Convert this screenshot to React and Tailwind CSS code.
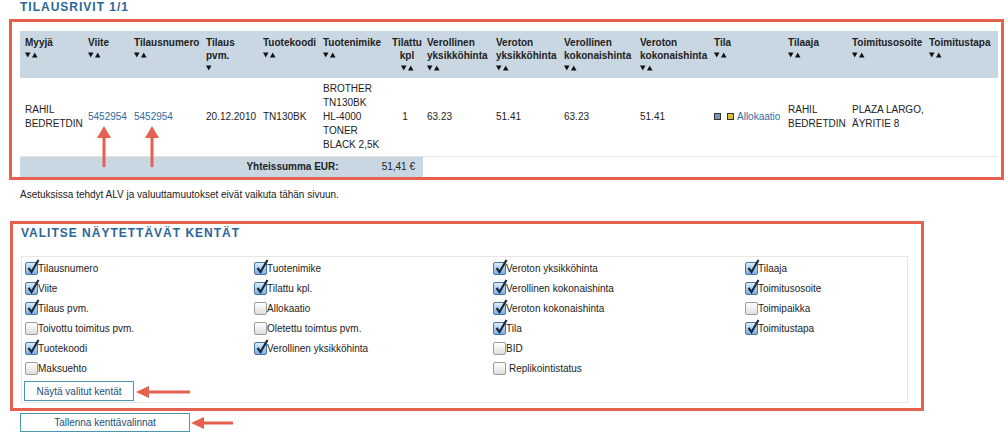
import React from "react";

const Sort = ({ up = true }) => (
  <svg width="13" height="6" viewBox="0 0 13 6" className="inline-block align-middle">
    <path d="M0 0.5h5.5L2.75 5.5z" fill="#111" />
    {up && <path d="M7 5.5h5.5L9.75 0.5z" fill="#111" />}
  </svg>
);

const Box = ({ checked }) =>
  checked ? (
    <span className="relative inline-block w-[13px] h-[13px] shrink-0 rounded-[2px] border border-[#4a76a0] bg-linear-to-b from-[#dcecfa] to-[#7db0de]">
      <svg className="absolute -top-[4px] left-[1px]" width="13" height="15" viewBox="0 0 13 15">
        <path d="M1.5 9 L4.5 13 L11.5 1" stroke="#1b2a44" strokeWidth="2.2" fill="none" />
      </svg>
    </span>
  ) : (
    <span className="inline-block w-[13px] h-[13px] shrink-0 rounded-[2px] border border-[#9c9c9c] bg-linear-to-b from-white to-[#dedede]" />
  );

const headers = [
  { l: ["Myyjä"] },
  { l: ["Viite"] },
  { l: ["Tilausnumero"] },
  { l: ["Tilaus", "pvm."], one: true },
  { l: ["Tuotekoodi"] },
  { l: ["Tuotenimike"] },
  { l: ["Tilattu", "kpl"], c: true },
  { l: ["Verollinen", "yksikköhinta"] },
  { l: ["Veroton", "yksikköhinta"] },
  { l: ["Verollinen", "kokonaishinta"] },
  { l: ["Veroton", "kokonaishinta"] },
  { l: ["Tila"] },
  { l: ["Tilaaja"] },
  { l: ["Toimitusosoite"] },
  { l: ["Toimitustapa"] },
];

const widths = [64, 46, 72, 57, 60, 68, 36, 69, 68, 76, 74, 74, 64, 77, 73];

const cols = [
  [
    ["Tilausnumero", true],
    ["Viite", true],
    ["Tilaus pvm.", true],
    ["Toivottu toimitus pvm.", false],
    ["Tuotekoodi", true],
    ["Maksuehto", false],
  ],
  [
    ["Tuotenimike", true],
    ["Tilattu kpl.", true],
    ["Allokaatio", false],
    ["Oletettu toimtus pvm.", false],
    ["Verollinen yksikköhinta", true],
  ],
  [
    ["Veroton yksikköhinta", true],
    ["Verollinen kokonaishinta", true],
    ["Veroton kokonaishinta", true],
    ["Tila", true],
    ["BID", false],
    [" Replikointistatus", false],
  ],
  [
    ["Tilaaja", true],
    ["Toimitusosoite", true],
    ["Toimipaikka", false],
    ["Toimitustapa", true],
  ],
];

const App = () => {
  return (
    <div className="relative w-[1008px] h-[438px] overflow-hidden bg-white font-['Liberation_Sans',Arial,sans-serif] text-[10px] text-[#222]">
      <div className="ml-5 h-[15px] leading-[15px] text-[12px] font-bold tracking-[1px] text-[#2b6698]">
        TILAUSRIVIT 1/1
      </div>

      <div className="ml-[9px] mt-[4px] w-[995px] border-[3px] border-[#e4604f] pt-[9px] pl-[8px]">
        <table className="w-[978px] table-fixed border-collapse">
          <colgroup>
            {widths.map((w, i) => (
              <col key={i} style={{ width: w }} />
            ))}
          </colgroup>
          <thead>
            <tr className="h-[47px] bg-[#c9d7e3]">
              {headers.map((h, i) => (
                <th
                  key={i}
                  className={`align-top pt-[5px] font-bold leading-[13px] whitespace-nowrap ${
                    h.c ? "text-center" : "text-left"
                  } ${i === 0 ? "pl-[5px]" : "pl-[4px]"}`}
                >
                  {h.l.map((t, j) => (
                    <div key={j}>{t}</div>
                  ))}
                  <div className="leading-[11px]">
                    <Sort up={!h.one} />
                  </div>
                </th>
              ))}
            </tr>
          </thead>
          <tbody>
            <tr className="h-[78px] border-b border-[#e4e4e4] leading-[14px]">
              <td className="pl-[5px]">RAHIL<br />BEDRETDIN</td>
              <td className="pl-[4px] text-[#2d6ca2]">5452954</td>
              <td className="pl-[4px] text-[#2d6ca2]">5452954</td>
              <td className="pl-[4px]">20.12.2010</td>
              <td className="pl-[4px]">TN130BK</td>
              <td className="pl-[4px] whitespace-nowrap">BROTHER<br />TN130BK<br />HL-4000<br />TONER<br />BLACK 2,5K</td>
              <td className="text-center">1</td>
              <td className="pl-[4px]">63.23</td>
              <td className="pl-[4px]">51.41</td>
              <td className="pl-[4px]">63.23</td>
              <td className="pl-[4px]">51.41</td>
              <td className="pl-[4px] whitespace-nowrap">
                <span className="inline-flex items-center">
                  <span className="inline-block w-[7px] h-[7px] border border-[#333] bg-[#7f95b5]" />
                  <span className="inline-block ml-[6px] w-[7px] h-[7px] border border-[#333] bg-[#d6c03a]" />
                  <span className="ml-[3px] text-[#2d6ca2]">Allokaatio</span>
                </span>
              </td>
              <td className="pl-[4px]">RAHIL<br />BEDRETDIN</td>
              <td className="pl-[4px] whitespace-nowrap">PLAZA LARGO,<br />ÄYRITIE 8</td>
              <td className="pl-[4px]"></td>
            </tr>
            <tr className="h-[21px]">
              <td colSpan={7} className="bg-[#c9d7e3] pr-[8px]">
                <div className="flex justify-end gap-[43px]">
                  <span className="font-bold">Yhteissumma EUR:</span>
                  <span>51,41 €</span>
                </div>
              </td>
              <td colSpan={8}></td>
            </tr>
          </tbody>
        </table>
      </div>

      <div className="ml-5 mt-[8px] leading-[14px]">
        Asetuksissa tehdyt ALV ja valuuttamuutokset eivät vaikuta tähän sivuun.
      </div>

      <div className="ml-[10px] mt-[19px] w-[914px] border-[3px] border-[#e4604f] pt-[2px] pl-[8px] pb-[5px]">
        <div className="h-[15px] leading-[15px] text-[12px] font-bold tracking-[1px] text-[#2b6698]">
          VALITSE NÄYTETTÄVÄT KENTÄT
        </div>
        <div className="mt-[15px] w-[887px] border border-[#e6e6e6] pt-[1px] pl-[3px] pb-[1px]">
          <div className="grid grid-cols-[229px_239px_252px_1fr]">
            {cols.map((c, i) => (
              <div key={i} className="flex flex-col">
                {c.map(([label, on]) => (
                  <div key={label} className="flex h-[20px] items-center">
                    <Box checked={on} />
                    <span className={label.startsWith(" ") ? "ml-[3px]" : ""}>{label.trim()}</span>
                  </div>
                ))}
              </div>
            ))}
          </div>
          <button
            type="button"
            className="-ml-[1px] mt-[3px] h-[20px] w-[110px] border border-[#4a98ad] bg-white text-[10px] text-[#1f4e79]"
          >
            Näytä valitut kentät
          </button>
        </div>
      </div>

      <button
        type="button"
        className="ml-5 mt-[2px] h-[19px] w-[170px] border border-[#4a98ad] bg-white text-[10px] text-[#1f4e79]"
      >
        Tallenna kenttävalinnat
      </button>

      <svg className="pointer-events-none absolute left-0 top-0" width="1008" height="438">
        <g fill="#e5604e">
          <rect x="102.5" y="137" width="3" height="30" />
          <polygon points="97,138 111,138 104,126" />
          <rect x="150.5" y="137" width="3" height="30" />
          <polygon points="145,138 159,138 152,126" />
          <rect x="148" y="390.5" width="42" height="3" />
          <polygon points="136,392 149,386 149,398" />
          <rect x="203" y="421.5" width="30" height="3" />
          <polygon points="191,423 204,417 204,429" />
        </g>
      </svg>
    </div>
  );
};

export default App;
